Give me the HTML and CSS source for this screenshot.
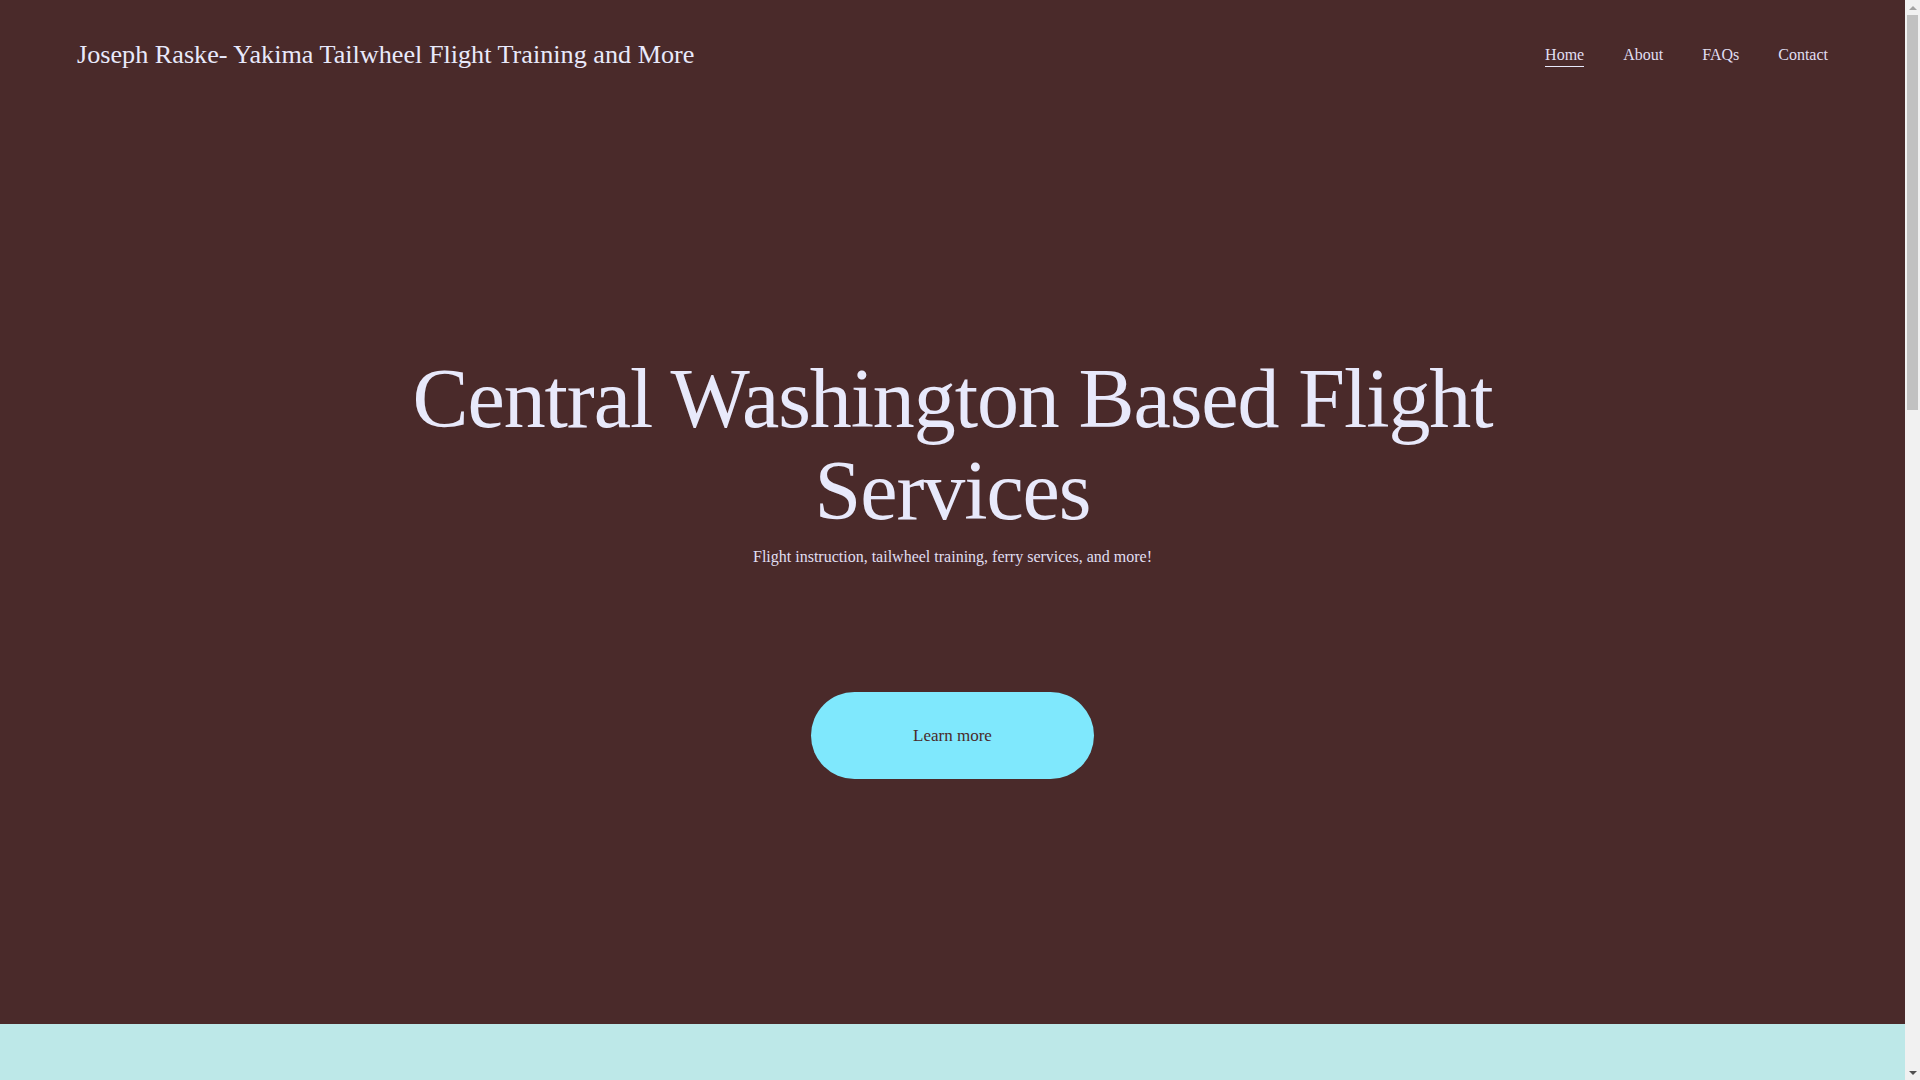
FILE: index.html
```html
<!DOCTYPE html>
<html lang="en">
<head>
<meta charset="utf-8">
<title>Joseph Raske- Yakima Tailwheel Flight Training and More</title>
<link rel="stylesheet" href="styles.css">
</head>
<body>
<div class="hero-wrap">
  <header class="site-header">
    <a class="site-title" href="#">Joseph Raske- Yakima Tailwheel Flight Training and More</a>
    <nav class="site-nav">
      <a class="nav-link active" href="#">Home</a>
      <a class="nav-link" href="#">About</a>
      <a class="nav-link" href="#">FAQs</a>
      <a class="nav-link" href="#">Contact</a>
    </nav>
  </header>
  <section class="hero">
    <h1 class="hero-title">Central Washington Based Flight Services</h1>
    <p class="hero-sub">Flight instruction, tailwheel training, ferry services, and more!</p>
    <a class="hero-btn" href="#">Learn more</a>
  </section>
</div>
<section class="info"></section>
<div class="fake-scrollbar" aria-hidden="true">
  <div class="sb-arrow sb-up"></div>
  <div class="sb-track"><div class="sb-thumb"></div></div>
  <div class="sb-arrow sb-down"></div>
</div>
</body>
</html>
```

FILE: styles.css
```css
html, body {
  margin: 0;
  padding: 0;
}
html::-webkit-scrollbar {
  display: none;
}
html {
  scrollbar-width: none;
}
body {
  font-family: "Liberation Serif", "Times New Roman", serif;
  background: #4a2a2a;
  color: #e8e9fb;
  margin-right: 15px;
}
.hero-wrap {
  background: #4a2a2a;
}
.site-header {
  height: 110px;
  padding: 0 77px;
  display: flex;
  align-items: center;
  justify-content: space-between;
}
.site-title {
  font-size: 26.2px;
  color: #e8e9fb;
  text-decoration: none;
  margin-top: -1px;
}
.site-nav {
  display: flex;
  gap: 39px;
  margin-top: 2px;
}
.nav-link {
  font-size: 16px;
  color: #e0dff2;
  text-decoration: none;
  padding-bottom: 2px;
  border-bottom: 1px solid transparent;
}
.nav-link.active {
  border-bottom-color: #e8e9fb;
}
.hero {
  height: 914px;
  padding-bottom: 2px;
  box-sizing: border-box;
  display: flex;
  flex-direction: column;
  align-items: center;
  justify-content: center;
  text-align: center;
}
.hero-title {
  margin: 0;
  font-weight: normal;
  font-size: 84px;
  line-height: 92px;
  width: 1200px;
  color: #e8e9fb;
  letter-spacing: -1.1px;
}
.hero-sub {
  margin: 8px 0 0;
  font-size: 16px;
  line-height: 24px;
  color: #e0dff2;
}
.hero-btn {
  margin-top: 123px;
  width: 283px;
  height: 87px;
  border-radius: 44px;
  background: #7fe8fd;
  color: #4a2a2a;
  font-size: 17px;
  text-decoration: none;
  display: flex;
  align-items: center;
  justify-content: center;
}
.info {
  background: #bde8e8;
  height: 1750px;
}
.fake-scrollbar {
  position: fixed;
  top: 0;
  right: 0;
  width: 15px;
  height: 100vh;
  background: #f1f1f1;
  display: flex;
  flex-direction: column;
}
.sb-arrow {
  height: 15px;
  display: flex;
  align-items: center;
  justify-content: center;
}
.sb-up::before,
.sb-down::before {
  content: "";
  width: 0;
  height: 0;
  border-left: 4px solid transparent;
  border-right: 4px solid transparent;
}
.sb-up::before {
  border-bottom: 4px solid #a3a3a3;
}
.sb-down::before {
  border-top: 4px solid #505050;
}
.sb-track {
  flex: 1;
  padding: 0 2px;
}
.sb-thumb {
  height: 395px;
  background: #c1c1c1;
}
```
